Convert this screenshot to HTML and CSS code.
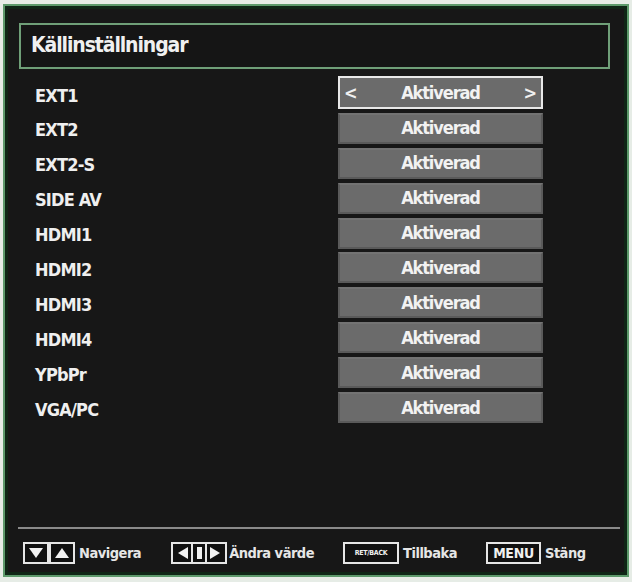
FILE: index.html
```html
<!DOCTYPE html>
<html lang="sv">
<head>
<meta charset="utf-8">
<title>Källinställningar</title>
<link rel="stylesheet" href="styles.css">
</head>
<body>
<div class="frame">
  <div class="title-box"><h1 class="title">Källinställningar</h1></div>
  <div class="list">
    <div class="row"><span class="label">EXT1</span><span class="value selected"><span class="arrow">&lt;</span><span class="val-text">Aktiverad</span><span class="arrow">&gt;</span></span></div>
    <div class="row"><span class="label">EXT2</span><span class="value"><span class="val-text">Aktiverad</span></span></div>
    <div class="row"><span class="label">EXT2-S</span><span class="value"><span class="val-text">Aktiverad</span></span></div>
    <div class="row"><span class="label">SIDE AV</span><span class="value"><span class="val-text">Aktiverad</span></span></div>
    <div class="row"><span class="label">HDMI1</span><span class="value"><span class="val-text">Aktiverad</span></span></div>
    <div class="row"><span class="label">HDMI2</span><span class="value"><span class="val-text">Aktiverad</span></span></div>
    <div class="row"><span class="label">HDMI3</span><span class="value"><span class="val-text">Aktiverad</span></span></div>
    <div class="row"><span class="label">HDMI4</span><span class="value"><span class="val-text">Aktiverad</span></span></div>
    <div class="row"><span class="label">YPbPr</span><span class="value"><span class="val-text">Aktiverad</span></span></div>
    <div class="row"><span class="label">VGA/PC</span><span class="value"><span class="val-text">Aktiverad</span></span></div>
  </div>
  <div class="separator"></div>
  <div class="footer">
    <div class="hint">
      <svg class="key" width="52" height="22" viewBox="0 0 52 22">
        <rect x="1" y="1" width="24" height="20" fill="#111" stroke="#e6e6e6" stroke-width="2"/>
        <rect x="27" y="1" width="24" height="20" fill="#111" stroke="#e6e6e6" stroke-width="2"/>
        <polygon points="6,6 20,6 13,16" fill="#f2f2f2"/>
        <polygon points="32,16 46,16 39,6" fill="#f2f2f2"/>
      </svg>
      <span class="hint-text">Navigera</span>
    </div>
    <div class="hint">
      <svg class="key" width="56" height="22" viewBox="0 0 56 22">
        <rect x="1" y="1" width="54" height="20" fill="#111" stroke="#e6e6e6" stroke-width="2"/>
        <polygon points="17,5 17,17 7,11" fill="#f2f2f2"/>
        <rect x="20" y="2" width="2" height="18" fill="#e6e6e6"/>
        <rect x="26" y="5" width="5" height="12" fill="#f2f2f2"/>
        <rect x="34" y="2" width="2" height="18" fill="#e6e6e6"/>
        <polygon points="39,5 39,17 49,11" fill="#f2f2f2"/>
      </svg>
      <span class="hint-text">Ändra värde</span>
    </div>
    <div class="hint">
      <span class="key-box key-ret">RET/BACK</span>
      <span class="hint-text">Tillbaka</span>
    </div>
    <div class="hint">
      <span class="key-box key-menu">MENU</span>
      <span class="hint-text">Stäng</span>
    </div>
  </div>
</div>
</body>
</html>
```
FILE: styles.css
```css
html, body {
  margin: 0;
  padding: 0;
}
body {
  background: #e6ece6;
  width: 632px;
  height: 582px;
  overflow: hidden;
  font-family: "DejaVu Sans Condensed", "DejaVu Sans", sans-serif;
  font-weight: bold;
  color: #ececec;
}
.frame {
  box-sizing: border-box;
  margin: 4px 0 0 3px;
  width: 626px;
  height: 573px;
  background: #171717;
  border: 2px solid #5d9a6b;
  box-shadow: inset 0 0 0 3px #0f2616;
  padding: 17px 17px 11px 14px;
  display: flex;
  flex-direction: column;
}
.title-box {
  box-sizing: border-box;
  height: 46px;
  border: 2px solid #6f9f78;
  background: #151515;
  display: flex;
  align-items: center;
  padding: 0 0 2px 10px;
}
.title {
  margin: 0;
  font-size: 21px;
  font-weight: bold;
  color: #f0f0f0;
  letter-spacing: -1.1px;
}
.list {
  margin-top: 9px;
  padding-left: 16px;
  display: flex;
  flex-direction: column;
  gap: 3.9px;
  flex: 1;
}
.row {
  display: grid;
  grid-template-columns: 303px 205px;
  height: 31px;
  align-items: center;
}
.label {
  font-size: 18px;
  color: #efefef;
  letter-spacing: -0.8px;
  padding-top: 3px;
}
.value {
  box-sizing: border-box;
  height: 31px;
  background: #6b6b6b;
  border: 2px solid #5a5a5a;
  border-top-color: #737373;
  display: flex;
  align-items: center;
  justify-content: center;
  font-size: 18px;
  color: #f2f2f2;
  padding: 0 6px 1px;
}
.value.selected {
  height: 33px;
  margin-top: -2px;
  border: 2px solid #e8e8e8;
  justify-content: space-between;
  padding: 0 4px 1px;
}
.val-text {
  letter-spacing: -1.1px;
}
.arrow {
  font-size: 18px;
  font-weight: bold;
  color: #f0f0f0;
}
.separator {
  height: 2px;
  background: #8a8a8a;
  margin: 0 -10px 0 -1px;
}
.footer {
  display: flex;
  align-items: center;
  padding: 13px 0 0 4px;
  height: 22px;
}
.hint {
  display: flex;
  align-items: center;
  gap: 4px;
  margin-right: 30px;
  flex-shrink: 0;
  white-space: nowrap;
}
.hint:nth-child(2),
.hint:nth-child(3) {
  margin-right: 29px;
}
.hint:nth-child(2) .hint-text {
  margin-left: -2px;
}
.key {
  display: block;
  flex-shrink: 0;
}
.hint-text {
  font-size: 14.5px;
  color: #e6e6e6;
  letter-spacing: -0.5px;
  padding-bottom: 1px;
}
.key-box {
  box-sizing: border-box;
  height: 22px;
  border: 2px solid #e6e6e6;
  background: #111;
  color: #f0f0f0;
  display: flex;
  align-items: center;
  justify-content: center;
  flex-shrink: 0;
}
.key-ret {
  width: 56px;
  font-size: 7px;
  letter-spacing: -0.3px;
}
.key-menu {
  width: 55px;
  font-size: 14px;
  letter-spacing: -0.3px;
}
```
